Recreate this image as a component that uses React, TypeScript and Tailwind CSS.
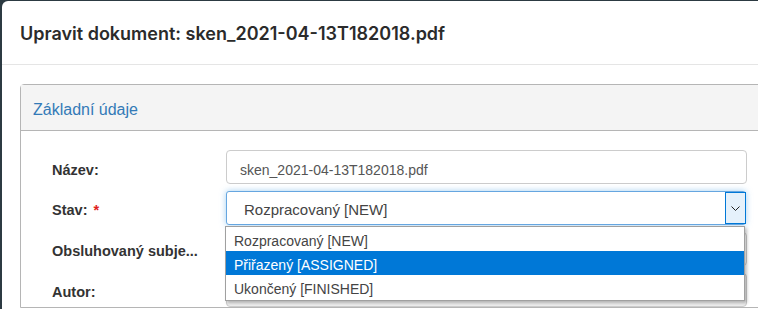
import React from "react";

const sans = { fontFamily: '"Liberation Sans", Arial, sans-serif' };

function Cursor() {
  return (
    <svg width="14" height="21" viewBox="0 0 14 21" className="absolute left-[614px] top-[266px]">
      <path d="M1 1 L1 16 L4.5 12.5 L7 18.5 L9.2 17.6 L6.8 11.8 L11.8 11.8 Z" fill="#fff" stroke="#000" strokeWidth="1" strokeLinejoin="round" />
    </svg>
  );
}

export default function App() {
  return (
    <div className="relative w-[758px] h-[309px] overflow-hidden bg-[#2c3a42]" style={sans}>
      <div className="ml-[2px] mt-[1px] h-[320px] w-[800px] bg-white rounded-tl-[6px]">
        <div className="h-[64px] border-b border-[#e5e5e5] pl-[18px] flex items-center">
          <span
            className="text-[18px] font-semibold text-[#2b2b2b] pt-[1px]"
            style={{ fontFamily: 'Inter, "Liberation Sans", sans-serif' }}
          >
            Upravit dokument: sken_2021-04-13T182018.pdf
          </span>
        </div>
        <div className="pt-[19px] pl-[18px]">
          <div className="w-[800px] border border-[#b5b5b5] rounded-tl-[4px]">
            <div className="h-[46px] bg-[#f4f4f4] border-b border-[#b5b5b5] pl-[12px] flex items-center">
              <span className="text-[16px] text-[#337ab7] pt-[5px]">Základní údaje</span>
            </div>
            <div className="pt-[19px] pl-[31px] flex flex-col gap-[7px]">
              <div className="flex items-center h-[34px]">
                <div className="w-[174px] text-[14.5px] font-bold text-[#333] pt-[7px]">Název:</div>
                <div className="w-[521px] h-[34px] border border-[#ccc] rounded-[4px] flex items-center pl-[13px] pt-[6px] text-[14px] text-[#555]">
                  sken_2021-04-13T182018.pdf
                </div>
              </div>
              <div className="flex items-center h-[34px]">
                <div className="w-[174px] text-[14.5px] font-bold text-[#333] pt-[6px]">
                  Stav: <span className="text-[#e02020] ml-[2px]">*</span>
                </div>
                <div className="relative w-[520px] h-[34px]">
                  <div className="w-full h-full border border-[#66a6e0] rounded-[3px] shadow-[0_0_6px_rgba(102,175,233,0.6)] flex items-center bg-white">
                    <span className="pl-[17px] pt-[5px] text-[15px] text-[#444] flex-1">Rozpracovaný [NEW]</span>
                    <div className="w-[21px] h-full border border-[#0078d7] bg-[#e5f1fb] flex items-center justify-center -mr-[1px]">
                      <svg width="9" height="5" viewBox="0 0 9 5">
                        <path d="M0.5 0.5 L4.5 4.5 L8.5 0.5" fill="none" stroke="#222" strokeWidth="1" />
                      </svg>
                    </div>
                  </div>
                  <div className="absolute left-[-1px] top-[35px] w-[520px] bg-white border border-[#a0a0a0] shadow-[2px_2px_3px_rgba(0,0,0,0.25)] z-10 flex flex-col text-[14px] text-[#444]">
                    <div className="h-[24px] flex items-center pl-[8px] pt-[4px]">Rozpracovaný [NEW]</div>
                    <div className="h-[24px] flex items-center pl-[8px] pt-[4px] bg-[#0078d7] text-white">Přiřazený [ASSIGNED]</div>
                    <div className="h-[25px] flex items-center pl-[8px] pt-[4px]">Ukončený [FINISHED]</div>
                  </div>
                </div>
              </div>
              <div className="flex items-center h-[34px]">
                <div className="w-[174px] text-[14.5px] font-bold text-[#333] pt-[6px]">Obsluhovaný subje...</div>
                <div className="w-[521px] h-[34px] border border-[#ccc] rounded-[4px] bg-white" />
              </div>
              <div className="flex items-center h-[34px]">
                <div className="w-[174px] text-[14.5px] font-bold text-[#333] pt-[6px]">Autor:</div>
                <div className="w-[521px] h-[34px] border border-[#ccc] rounded-[4px] bg-[#eee]" />
              </div>
            </div>
          </div>
        </div>
      </div>
      <Cursor />
    </div>
  );
}
